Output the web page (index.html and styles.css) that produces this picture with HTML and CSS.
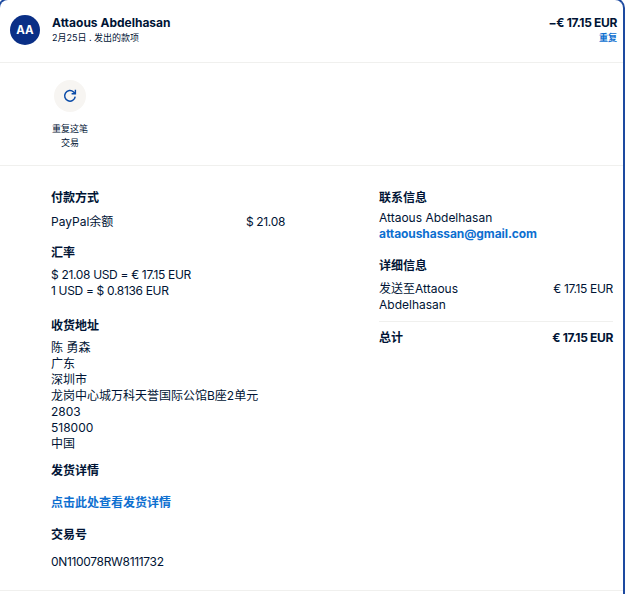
FILE: index.html
```html
<!DOCTYPE html>
<html lang="en">
<head>
    <meta name="viewport" content="width=device-width, initial-scale=1.0">
    <link rel="stylesheet" href="styles.css">
</head>
<body>
    <div class="card">
        <div class="head">
            <div class="avatar">AA</div>
            <div class="who">
                <p class="name">Attaous Abdelhasan</p>
                <p class="sub">2月25日 . 发出的款项</p>
            </div>
            <div class="sum">
                <p class="name num">−€ 17.15 EUR</p>
                <p class="sub link repeat">重复</p>
            </div>
        </div>
        <div class="actions">
            <div class="action">
                <div class="round">
                    <svg width="16" height="16" viewBox="0 0 16 16" fill="none" stroke="#0a4ba8" stroke-width="1.5">
                        <path d="M13.2 8.6A5.3 5.3 0 1 1 11.6 4L13.3 5.6"/>
                        <path d="M13.4 1.8V5.8H9.6" stroke-width="1.4"/>
                    </svg>
                </div>
                <p class="action-label">重复这笔<br>交易</p>
            </div>
        </div>
        <div class="details">
            <div class="left">
                <h4 class="title">付款方式</h4>
                <div class="line">
                    <span>PayPal余额</span>
                    <span class="num">$ 21.08</span>
                </div>
                <h4 class="title rate">汇率</h4>
                <p class="text num rate-text">$ 21.08 USD = € 17.15 EUR<br>1 USD = $ 0.8136 EUR</p>
                <h4 class="title addr">收货地址</h4>
                <p class="text addr-text">陈 勇森<br>广东<br>深圳市<br>龙岗中心城万科天誉国际公馆B座2单元<br>2803<br>518000<br>中国</p>
                <h4 class="title ship">发货详情</h4>
                <p class="text bold link gap">点击此处查看发货详情</p>
                <h4 class="title trans">交易号</h4>
                <p class="text num trans-id">0N110078RW8111732</p>
            </div>
            <div class="right">
                <h4 class="title">联系信息</h4>
                <p class="text contact">Attaous Abdelhasan<br><span class="bold link email">attaoushassan@gmail.com</span></p>
                <h4 class="title info">详细信息</h4>
                <div class="line sent">
                    <span class="to">发送至Attaous Abdelhasan</span>
                    <span class="num">€ 17.15 EUR</span>
                </div>
                <div class="line total">
                    <span class="bold">总计</span>
                    <span class="bold num">€ 17.15 EUR</span>
                </div>
            </div>
        </div>
    </div>
</body>
</html>
```
FILE: styles.css
```css
* {
    box-sizing: border-box;
}
html, body {
    margin: 0;
    height: 594px;
    overflow: hidden;
    background: #fff;
}
body {
    font-family: Inter, "Noto Sans CJK SC", sans-serif;
    font-size: 12px;
    line-height: 16px;
    color: #001435;
}
p, h4 {
    margin: 0;
}
.card {
    width: 627px;
    height: 600px;
    margin: -2px 0 0 -2px;
    border: 2px solid #1d4aa0;
    border-bottom: none;
    border-radius: 10px 10px 0 0;
}
.head {
    display: flex;
    align-items: center;
    height: 63px;
    padding: 0 6px 3px 10px;
    border-bottom: 1px solid #f0f0ee;
}
.avatar {
    width: 30px;
    height: 30px;
    border-radius: 50%;
    background: #0a2f86;
    color: #fff;
    font-weight: 700;
    font-size: 11.5px;
    line-height: 30px;
    text-align: center;
}
.who {
    margin-left: 12px;
    flex: 1;
}
.sum {
    text-align: right;
}
.name {
    font-size: 12px;
    font-weight: 700;
    line-height: 16px;
}
.sub {
    font-size: 9px;
    line-height: 14px;
}
.link {
    color: #0d6fd0;
}
.repeat {
    font-weight: 700;
}
.num {
    letter-spacing: -0.33px;
}
.actions {
    height: 103px;
    padding: 17px 0 0 42px;
    border-bottom: 1px solid #f0f0ee;
}
.action {
    width: 56px;
    display: flex;
    flex-direction: column;
    align-items: center;
}
.round {
    width: 32px;
    height: 32px;
    border-radius: 50%;
    background: #f7f5f2;
    display: flex;
    align-items: center;
    justify-content: center;
}
.action-label {
    margin-top: 10px;
    font-size: 9px;
    line-height: 14px;
    text-align: center;
}
.details {
    display: flex;
    height: 425px;
    padding: 24px 10px 0 51px;
    border-bottom: 1px solid #f0f0ee;
}
.left {
    width: 234px;
}
.right {
    width: 234px;
    margin-left: 94px;
}
.title {
    font-size: 12px;
    font-weight: 700;
    line-height: 16px;
}
.line {
    display: flex;
    justify-content: space-between;
    margin-top: 8px;
}
.text {
    line-height: 16px;
    margin-top: 5px;
}
.bold {
    font-weight: 700;
}
.gap {
    margin-top: 16px;
}
.rate {
    margin-top: 15px;
}
.rate-text {
    margin-top: 6px;
}
.addr {
    margin-top: 19px;
}
.addr-text {
    margin-top: 6px;
}
.ship {
    margin-top: 11px;
}
.trans {
    margin-top: 16px;
}
.trans-id {
    margin-top: 11px;
}
.contact {
    margin-top: 4px;
}
.email {
    letter-spacing: -0.08px;
}
.info {
    margin-top: 16px;
}
.to {
    width: 100px;
}
.sent {
    margin-top: 7px;
    padding-bottom: 8px;
    border-bottom: 1px solid #f0f0ee;
}
.total {
    margin-top: 8px;
}
```
